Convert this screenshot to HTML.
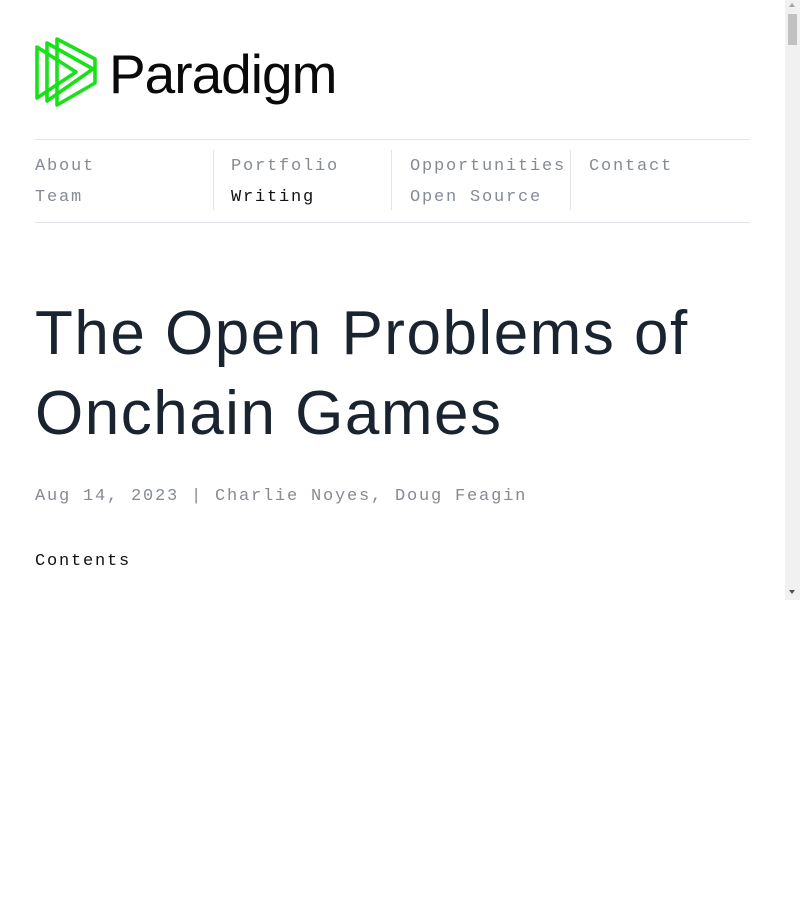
<!DOCTYPE html>
<html><head><meta charset="utf-8"><style>
html,body{margin:0;padding:0;background:#fff;width:800px;height:900px;overflow:hidden;position:relative}
.mono{font-family:"Liberation Mono",monospace;font-size:17px;letter-spacing:1.8px}
.nav{position:absolute;top:139px;left:35px;width:715px;height:82px;border-top:1px solid #e2e6ea;border-bottom:1px solid #e2e6ea}
.col{position:absolute;top:11px;height:60px}
.div{position:absolute;top:10px;width:1px;height:60px;background:#e2e6ea}
.col div{height:31px;line-height:31px;color:#858b93}
h1{position:absolute;left:35px;top:294px;margin:0;font-family:"Liberation Sans",sans-serif;font-weight:400;font-size:62px;line-height:80px;color:#1a2430;letter-spacing:1.5px}
</style></head><body>
<svg style="position:absolute;left:0;top:0" width="110" height="115" viewBox="0 0 110 115" fill="none" stroke="#19e019" stroke-width="3.6" stroke-linejoin="round">
<path d="M57 39 L95 59 L95 83 L57 105 Z"/>
<path d="M47 43 L93 69 L47 101 Z"/>
<path d="M37 47 L76 72 L37 98 Z"/>
</svg>
<div style="position:absolute;left:109px;top:42px;font-family:'Liberation Sans',sans-serif;font-size:55px;color:#0a0a0a;letter-spacing:-1px;line-height:64px">Paradigm</div>
<div class="nav mono">
<div class="col" style="left:0"><div>About</div><div>Team</div></div>
<div class="div" style="left:178px"></div>
<div class="col" style="left:196px"><div>Portfolio</div><div style="color:#111">Writing</div></div>
<div class="div" style="left:356px"></div>
<div class="col" style="left:375px"><div>Opportunities</div><div>Open Source</div></div>
<div class="div" style="left:535px"></div>
<div class="col" style="left:554px"><div>Contact</div></div>
</div>
<h1>The Open Problems of<br>Onchain Games</h1>
<div class="mono" style="position:absolute;left:35px;top:487px;color:#858b93">Aug 14, 2023 | Charlie Noyes, Doug Feagin</div>
<div class="mono" style="position:absolute;left:35px;top:552px;color:#111">Contents</div>
<div style="position:absolute;left:785px;top:0;width:15px;height:600px;background:#f1f1f1">
<div style="position:absolute;left:3px;top:14px;width:9px;height:31px;background:#c1c1c1"></div>
<div style="position:absolute;left:4px;top:3px;width:0;height:0;border-left:3.5px solid transparent;border-right:3.5px solid transparent;border-bottom:4px solid #a3a3a3"></div>
<div style="position:absolute;left:4px;top:590px;width:0;height:0;border-left:3.5px solid transparent;border-right:3.5px solid transparent;border-top:4px solid #505050"></div>
</div>
</body></html>
